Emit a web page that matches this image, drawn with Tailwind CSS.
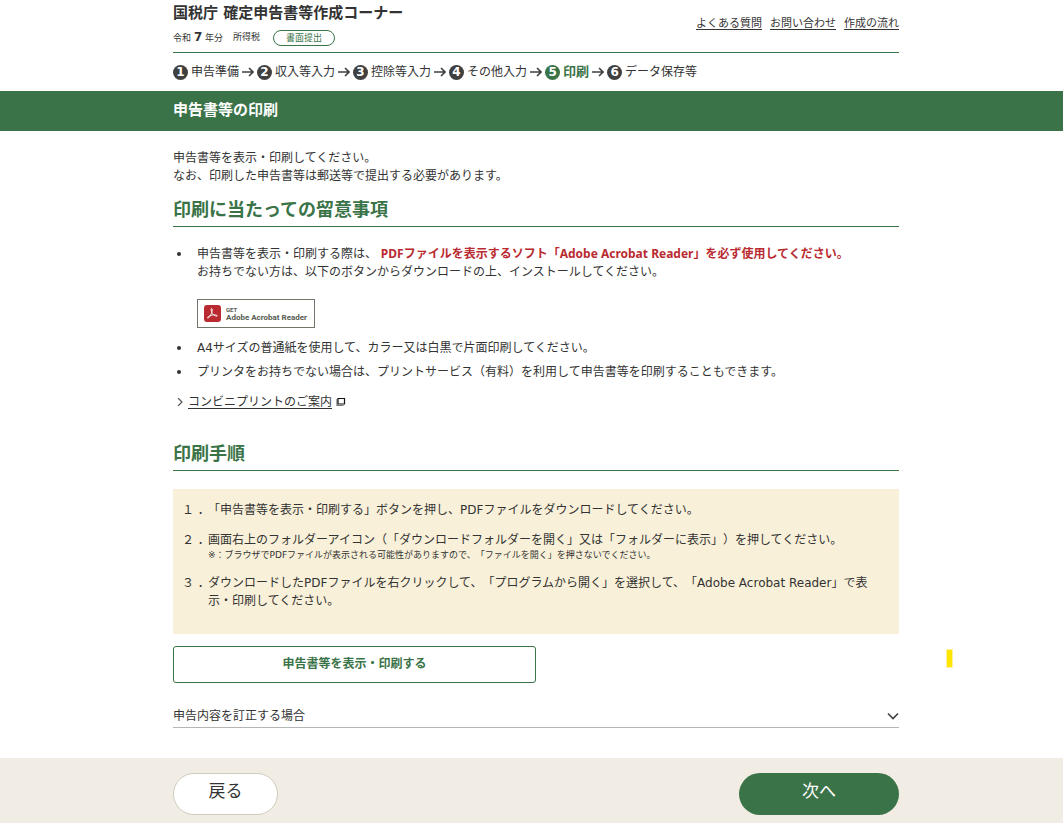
<!DOCTYPE html>
<html lang="ja">
<head>
    <meta charset="UTF-8">
    <meta name="viewport" content="width=device-width, initial-scale=1.0">
    <title>申告書等の印刷 - 国税庁 確定申告書等作成コーナー</title>
    <script src="https://cdn.jsdelivr.net/npm/@tailwindcss/browser@4"></script>
</head>
<body class="relative bg-white text-[#333333] text-[12px] leading-[18px] [text-spacing-trim:space-all] font-['DejaVu_Sans','Noto_Sans_CJK_JP',sans-serif]">
    <header class="max-w-[735px] mx-auto pl-[9px]">
        <div class="flex justify-between border-b border-[#3a7347] pt-[3px] pb-[5px]">
            <div>
                <p class="text-[15px] leading-[20px] font-bold">国税庁 確定申告書等作成コーナー</p>
                <div class="flex items-center h-[18px] mt-[6px] text-[9px]">
                    <p class="pb-[2px]">令和 <b class="text-[12px]">7</b> 年分</p>
                    <p class="ml-[10px] pb-[2px]">所得税</p>
                    <p class="ml-[13px] w-[62px] h-[16px] leading-[14px] text-center text-[#3a7347] border border-[#3a7347] rounded-full">書面提出</p>
                </div>
            </div>
            <nav class="flex gap-[8px] pt-[12px] text-[11px]">
                <a href="#" class="underline underline-offset-2">よくある質問</a>
                <a href="#" class="underline underline-offset-2">お問い合わせ</a>
                <a href="#" class="underline underline-offset-2">作成の流れ</a>
            </nav>
        </div>

        <!-- 入力ステップ -->
        <ol class="flex items-center gap-[3px] h-[38px] whitespace-nowrap">
            <li class="flex items-center gap-[3px]">
                <span class="size-[15px] rounded-full bg-[#404040] text-white font-bold text-center leading-[15px]">1</span>申告準備
                <svg class="w-[12px] h-[12px]" viewBox="0 0 12 12" fill="none" stroke="#404040" stroke-width="1.6"><path d="M0 6h11M7 2l4 4-4 4"/></svg>
            </li>
            <li class="flex items-center gap-[3px]">
                <span class="size-[15px] rounded-full bg-[#404040] text-white font-bold text-center leading-[15px]">2</span>収入等入力
                <svg class="w-[12px] h-[12px]" viewBox="0 0 12 12" fill="none" stroke="#404040" stroke-width="1.6"><path d="M0 6h11M7 2l4 4-4 4"/></svg>
            </li>
            <li class="flex items-center gap-[3px]">
                <span class="size-[15px] rounded-full bg-[#404040] text-white font-bold text-center leading-[15px]">3</span>控除等入力
                <svg class="w-[12px] h-[12px]" viewBox="0 0 12 12" fill="none" stroke="#404040" stroke-width="1.6"><path d="M0 6h11M7 2l4 4-4 4"/></svg>
            </li>
            <li class="flex items-center gap-[3px]">
                <span class="size-[15px] rounded-full bg-[#404040] text-white font-bold text-center leading-[15px]">4</span>その他入力
                <svg class="w-[12px] h-[12px]" viewBox="0 0 12 12" fill="none" stroke="#404040" stroke-width="1.6"><path d="M0 6h11M7 2l4 4-4 4"/></svg>
            </li>
            <li class="flex items-center gap-[3px]" aria-current="step">
                <span class="size-[15px] rounded-full bg-[#3a7347] text-white font-bold text-center leading-[15px]">5</span>
                <b class="text-[13px] text-[#3a7347]">印刷</b>
                <svg class="w-[12px] h-[12px]" viewBox="0 0 12 12" fill="none" stroke="#404040" stroke-width="1.6"><path d="M0 6h11M7 2l4 4-4 4"/></svg>
            </li>
            <li class="flex items-center gap-[3px]">
                <span class="size-[15px] rounded-full bg-[#404040] text-white font-bold text-center leading-[15px]">6</span>データ保存等
            </li>
        </ol>
    </header>

    <div class="bg-[#3a7347]">
        <div class="max-w-[735px] mx-auto pl-[9px]">
            <h1 class="text-[15px] leading-[38px] pb-[2px] font-bold text-white">申告書等の印刷</h1>
        </div>
    </div>

    <main class="max-w-[735px] mx-auto pl-[9px] pt-[18px] pb-[30px]">
        <p>申告書等を表示・印刷してください。<br>なお、印刷した申告書等は郵送等で提出する必要があります。</p>

        <h2 class="mt-[12px] pb-[3px] text-[18px] leading-[26px] font-bold text-[#3a7347] border-b border-[#3a7347]">印刷に当たっての留意事項</h2>
        <ul class="mt-[18px] space-y-[6px] list-none">
            <li class="flex">
                <span class="w-[24px] shrink-0 pt-[7px] pl-[4px]"><span class="block size-[4px] rounded-full bg-[#333333]"></span></span>
                <div>
                    <p>申告書等を表示・印刷する際は、 <strong class="text-[#b92b30] font-['Noto_Sans','Noto_Sans_CJK_JP',sans-serif]">PDFファイルを表示するソフト「Adobe Acrobat Reader」を必ず使用してください。</strong></p>
                    <p>お持ちでない方は、以下のボタンからダウンロードの上、インストールしてください。</p>
                    <a href="#" class="mt-[18px] mb-[5px] flex items-center w-[118px] h-[29px] pl-[6px] border border-[#6f776b] bg-white">
                        <svg class="w-[17px] h-[17px]" viewBox="0 0 17 17">
                            <rect width="17" height="17" rx="3" fill="#b92b30"/>
                            <path d="M7.500 3.500c1.200 0 .8 3-.1 5C6.500 10.600 4.800 13.400 3.800 13.100c-1.200-.5 1.200-2.400 4.200-3 2.600-.5 5.200-.2 5.200.7 0 1-2.500.2-4-1.400C7.300 7.700 6.500 3.500 7.500 3.500z" fill="none" stroke="#fff" stroke-width=".9"/>
                        </svg>
                        <span class="ml-[5px] pt-[1px] font-[Roboto,sans-serif] font-bold text-[#555b50] whitespace-nowrap">
                            <span class="block text-[6px] leading-[7px]">GET</span>
                            <span class="block text-[8px] leading-[10px]">Adobe Acrobat Reader</span>
                        </span>
                    </a>
                </div>
            </li>
            <li class="flex">
                <span class="w-[24px] shrink-0 pt-[7px] pl-[4px]"><span class="block size-[4px] rounded-full bg-[#333333]"></span></span>
                <p>A4サイズの普通紙を使用して、カラー又は白黒で片面印刷してください。</p>
            </li>
            <li class="flex">
                <span class="w-[24px] shrink-0 pt-[7px] pl-[4px]"><span class="block size-[4px] rounded-full bg-[#333333]"></span></span>
                <p>プリンタをお持ちでない場合は、プリントサービス（有料）を利用して申告書等を印刷することもできます。</p>
            </li>
        </ul>
        <p class="flex items-center mt-[12px] pl-[4px]">
            <svg class="w-[6px] h-[8px] mr-[5px]" viewBox="0 0 6 8" fill="none" stroke="#555" stroke-width="1.2"><path d="M1 0l4 4-4 4"/></svg>
            <a href="#" class="underline underline-offset-2">コンビニプリントのご案内</a>
            <svg class="w-[10px] h-[10px] ml-[4px]" viewBox="0 0 10 10" fill="none"><path d="M1 2v6.500h6.500" stroke="#777" stroke-width="1.2"/><path d="M2 1.500h6.500v5.500H2z" stroke="#111" stroke-width="1.2"/></svg>
        </p>

        <h2 class="mt-[30px] pb-[3px] text-[18px] leading-[26px] font-bold text-[#3a7347] border-b border-[#3a7347]">印刷手順</h2>
        <ol class="mt-[18px] pt-[12px] pb-[24px] pl-[9px] pr-[24px] space-y-[12px] bg-[#f8f0d9]">
            <li class="flex"><span class="w-[26px] shrink-0 whitespace-nowrap">１ ．</span><p>「申告書等を表示・印刷する」ボタンを押し、PDFファイルをダウンロードしてください。</p></li>
            <li class="flex">
                <span class="w-[26px] shrink-0 whitespace-nowrap">２ ．</span>
                <div>
                    <p>画面右上のフォルダーアイコン（「ダウンロードフォルダーを開く」又は「フォルダーに表示」）を押してください。</p>
                    <p class="text-[9px] leading-[13px]">※：ブラウザでPDFファイルが表示される可能性がありますので、「ファイルを開く」を押さないでください。</p>
                </div>
            </li>
            <li class="flex"><span class="w-[26px] shrink-0 whitespace-nowrap">３ ．</span><p>ダウンロードしたPDFファイルを右クリックして、「プログラムから開く」を選択して、「Adobe Acrobat Reader」で表示・印刷してください。</p></li>
        </ol>

        <button type="button" class="block mt-[12px] w-1/2 h-[37px] pb-[2px] font-bold text-[#3a7347] bg-white border border-[#3a7347] rounded-[3px]">申告書等を表示・印刷する</button>

        <button type="button" aria-expanded="false" class="flex w-full items-center justify-between mt-[24px] pb-[2px] border-b border-[#b5b5b5] text-left">
            申告内容を訂正する場合
            <svg class="w-[12px] h-[8px]" viewBox="0 0 12 8" fill="none" stroke="#404040" stroke-width="1.6"><path d="M1 1.5l5 5 5-5"/></svg>
        </button>
    </main>

    <footer class="bg-[#f1ede4] pt-[15px] pb-[8px]">
        <div class="max-w-[735px] mx-auto pl-[9px] flex justify-between">
            <button type="button" class="w-[105px] h-[42px] pb-[6px] text-[17px] bg-white border border-[#d0ccbe] rounded-full">戻る</button>
            <button type="button" class="w-[160px] h-[42px] pb-[6px] text-[17px] text-white bg-[#3a7347] rounded-full">次へ</button>
        </div>
    </footer>

    <!-- 黄色のマーカー -->
    <div class="absolute left-[946px] top-[649px] w-[7px] h-[19px] bg-[#ffe600] border border-[#fff0a0]"></div>
</body>
</html>
